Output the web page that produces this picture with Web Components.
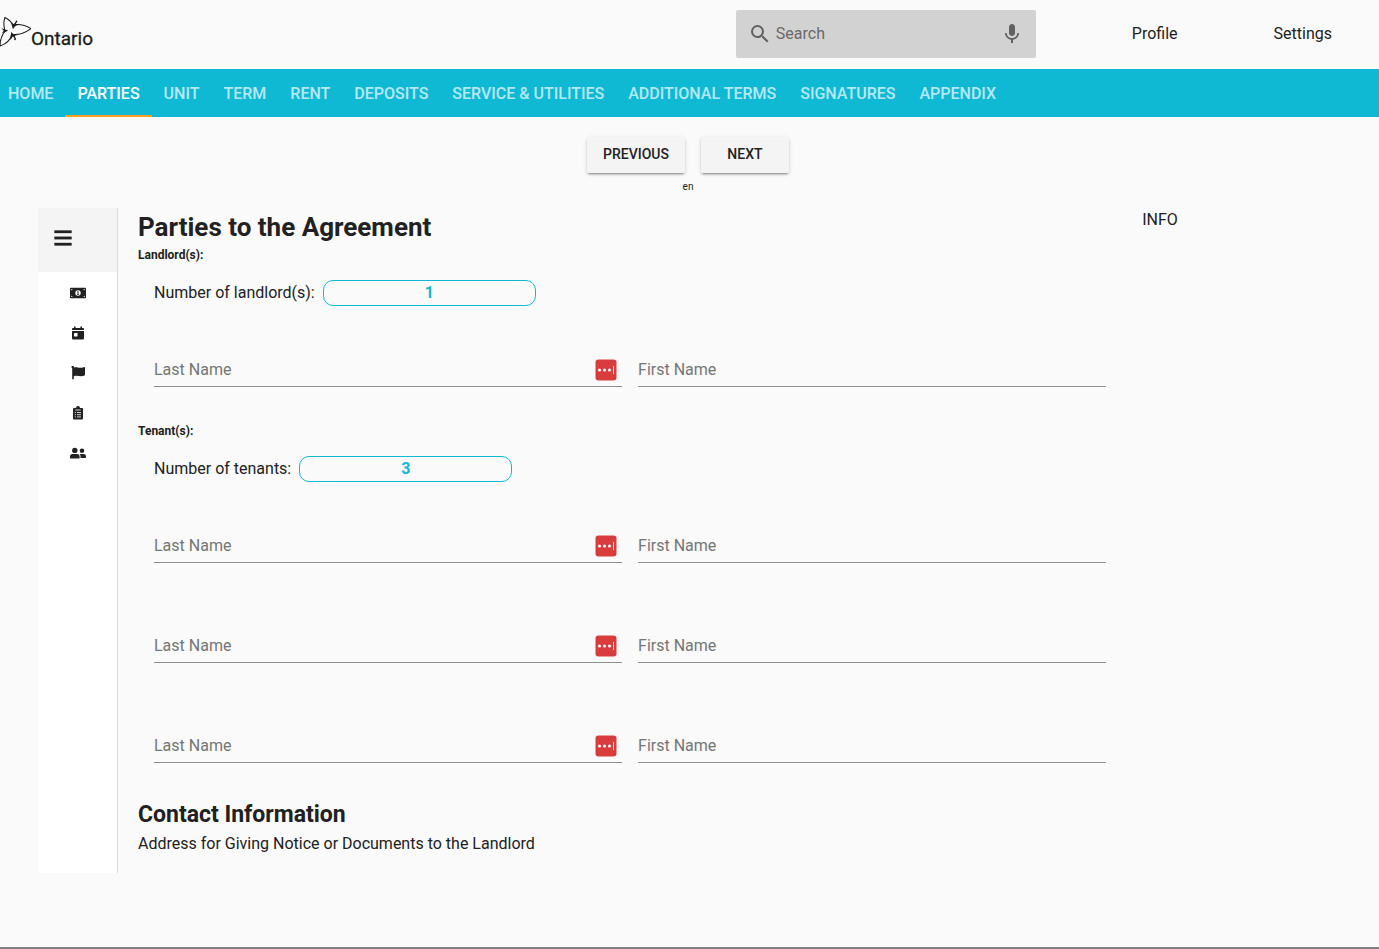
<!DOCTYPE html>
<html lang="en">
<head>
<meta charset="utf-8">
<meta name="viewport" content="width=device-width, initial-scale=1">
<title>Ontario Lease Agreement</title>
<style>
body { margin: 0; background: #fafafa; color: #212121; font: 16px/20px Roboto, sans-serif; }
</style>
</head>
<body>
<lease-app></lease-app>
<script>
function define(name, html, setup) {
  const tpl = document.createElement('template');
  tpl.innerHTML = html;
  customElements.define(name, class extends HTMLElement {
    constructor() {
      super();
      this.attachShadow({ mode: 'open' }).append(tpl.content.cloneNode(true));
    }
    connectedCallback() { if (setup) setup(this, this.shadowRoot); }
  });
}

define('ontario-logo', `
<style>
:host { display: block; }
a { display: flex; align-items: flex-end; color: #1a1a1a; text-decoration: none; }
svg { display: block; width: 31px; height: 34px; }
span { font: 19px/20px Roboto, sans-serif; -webkit-text-stroke: 0.3px #1a1a1a; }
</style>
<a href="#home">
  <svg viewBox="0 0 32 34" aria-hidden="true" fill="none" stroke="#1a1a1a" stroke-linejoin="round">
    <path stroke-width="1.100" d="M5 15.500Q3 8 5 2Q10 4 14 10.500M14.500 9.500Q24 8.500 32 13.500Q24 19.500 13 20.500M12 20Q10 28 0 31.500Q0 22 5.500 15.500"/>
    <path fill="#1a1a1a" stroke="none" d="M11.500 7.500L14 9l2.800-3.200.8.700-1.600 2.800 5-.6-5.500 2.300-2.200 3.200zM1.500 13.200l3.500 1.300L8.500 15.500 5.500 17 2 18.300l1.800-2.500zM11.500 17l2.500 2.300 6-.8-5 2.300 1.500 3.200-.8.600-2.400-3.200-2.600 4.200z"/>
    <circle cx="17" cy="6" r=".9" fill="#1a1a1a" stroke="none"/><circle cx="15.500" cy="24.500" r=".9" fill="#1a1a1a" stroke="none"/>
  </svg>
  <span>Ontario</span>
</a>`);

define('search-box', `
<style>
:host { display: block; width: 300px; }
form { display: flex; align-items: center; height: 48px; padding: 0 12px; box-sizing: border-box; background: #d2d2d2; border-radius: 2px; }
svg { display: block; width: 24px; height: 24px; fill: #616161; flex: none; }
input { flex: 1; min-width: 0; border: 0; padding: 0 4px; background: none; outline: none; font: inherit; color: #212121; }
input::placeholder { color: #696969; opacity: 1; }
button { border: 0; padding: 0; background: none; }
</style>
<form role="search">
  <svg viewBox="0 0 24 24" aria-hidden="true"><path d="M15.5 14h-.79l-.28-.27A6.47 6.47 0 0 0 16 9.500 6.500 6.500 0 1 0 9.500 16c1.610 0 3.090-.59 4.230-1.570l.27.28v.79l5 4.990L20.490 19l-4.990-5zm-6 0C7.010 14 5 11.990 5 9.500S7.010 5 9.500 5 14 7.010 14 9.500 11.990 14 9.500 14z"/></svg>
  <input type="text" placeholder="Search" aria-label="Search">
  <button type="button" aria-label="Search by voice"><svg viewBox="0 0 24 24"><path d="M12 14c1.660 0 2.990-1.340 2.990-3L15 5c0-1.660-1.340-3-3-3S9 3.340 9 5v6c0 1.660 1.340 3 3 3zm5.300-3c0 3-2.540 5.100-5.300 5.100S6.700 14 6.700 11H5c0 3.410 2.720 6.230 6 6.720V21h2v-3.280c3.280-.48 6-3.300 6-6.720h-1.700z"/></svg></button>
</form>`);

define('site-header', `
<style>
:host { display: block; }
header { display: flex; align-items: center; height: 69px; padding-right: 47px; box-sizing: border-box; }
ontario-logo { margin: 0 auto 6px 0; }
nav { display: flex; gap: 96px; padding-left: 96px; }
search-box, nav { margin-bottom: 1px; }
a { color: inherit; text-decoration: none; }
</style>
<header>
  <ontario-logo></ontario-logo>
  <search-box></search-box>
  <nav aria-label="Account"><a href="#profile">Profile</a><a href="#settings">Settings</a></nav>
</header>`);

define('nav-tab', `
<style>
:host { display: block; }
a { display: block; height: 48px; box-sizing: border-box; padding: 0 12px; border-bottom: 2px solid transparent; font-weight: 500; line-height: 50px; text-decoration: none; white-space: nowrap; color: rgba(255,255,255,.7); }
:host([active]) a { color: #fff; border-color: #ff9f1c; }
:host(:first-child) a { padding-left: 8px; }
</style>
<a><slot></slot></a>`, (host, root) => {
  root.querySelector('a').href = '#' + host.textContent.toLowerCase().replace(/[^a-z]+/g, '-');
});

define('tab-bar', `
<style>
:host { display: block; background: #0fb9d4; }
nav { display: flex; }
</style>
<nav aria-label="Lease sections"><slot></slot></nav>`);

define('raised-button', `
<style>
:host { display: block; }
button { display: block; min-width: 88px; height: 36px; padding: 0 16px 2px; border: 0; border-radius: 2px; background: #f4f4f4; color: #212121; font: 500 14px/34px Roboto, sans-serif; box-shadow: 0 3px 1px -2px rgba(0,0,0,.2), 0 2px 2px rgba(0,0,0,.14), 0 1px 5px rgba(0,0,0,.12); }
</style>
<button type="button"><slot></slot></button>`);

define('step-controls', `
<style>
:host { display: block; padding: 20px 3px 15px 0; text-align: center; }
div { display: flex; justify-content: center; gap: 16px; }
p { margin: 7px 0 0; font-size: 10px; line-height: 13px; }
</style>
<div><raised-button>PREVIOUS</raised-button><raised-button>NEXT</raised-button></div>
<p>en</p>`);

define('side-menu', `
<style>
:host { display: block; background: #fff; border-right: 1px solid #dcdcdc; }
.head { display: flex; align-items: center; height: 64px; padding: 0 15px 4px; box-sizing: border-box; background: #f4f4f4; }
button { border: 0; padding: 0; background: none; }
ul { list-style: none; margin: 0; padding: 0; }
a { display: flex; align-items: center; justify-content: center; height: 40px; padding-top: 1px; box-sizing: border-box; }
svg { display: block; fill: #212121; }
</style>
<div class="head"><button type="button" aria-label="Toggle menu"><svg width="20" height="20" viewBox="0 0 20 20"><path d="M1.500 2.500h17v2.500h-17zM1.500 8.700h17v2.500h-17zM1.500 14.900h17v2.500h-17z" stroke="#212121" stroke-width=".3"/></svg></button></div>
<ul>
  <li><a href="#rent" aria-label="Rent"><svg width="16" height="12" viewBox="0 0 16 12"><path fill-rule="evenodd" d="M.8.800h14.400q.8 0 .8.800v8.800q0 .8-.8.800H.8q-.8 0-.8-.8V1.600Q0 .8.800.8z"/><g fill="#fff"><circle cx="8" cy="6" r="2.700"/><path d="M1.300 2h1.500L1.300 3.500zM14.700 2h-1.500l1.500 1.500zM1.300 10h1.500L1.300 8.500zM14.700 10h-1.500l1.500-1.500z"/></g><path d="M7.200 4.200h1.300v2.800h.6v.8H7v-.8h.5V5H7z"/></svg></a></li>
  <li><a href="#term" aria-label="Term"><svg width="14" height="14" viewBox="0 0 14 14"><path d="M1 4V3q0-1 1-1h1V.5h1.600V2h4.800V.5H11V2h1q1 0 1 1v1zM1 5h12v7.500q0 1-1 1H2q-1 0-1-1z"/><rect x="3" y="7" width="3.500" height="3.500" rx=".4" fill="#fff"/></svg></a></li>
  <li><a href="#additional-terms" aria-label="Additional terms"><svg width="14" height="14" viewBox="0 0 14 14"><path d="M.5 1.300a1.200 1.200 0 1 1 2.300.3C6 .4 8 3 12.500 1.200Q14 .6 14 2v6.600q0 .6-.5.900C9.500 11.500 7 8.700 2.800 10.300v3H1.200V2.300Q.5 2 .5 1.300z"/></svg></a></li>
  <li><a href="#appendix" aria-label="Appendix"><svg width="12" height="14" viewBox="0 0 12 14"><path d="M2 2h2a2 2 0 0 1 4 0h2q1 0 1 1v9.500q0 1-1 1H2q-1 0-1-1V3q0-1 1-1z"/><path d="M3.300 4h5.400M2.800 6.500H4M5 6.500h4M2.800 8.700H4M5 8.700h4M2.800 10.900H4M5 10.900h4" stroke="#fff" stroke-width=".8"/></svg></a></li>
  <li><a href="#parties" aria-label="Parties"><svg width="16" height="12" viewBox="0 0 16 12"><circle cx="4.800" cy="3.400" r="2.700"/><circle cx="12" cy="3.700" r="2.300"/><path d="M0 11V9.500Q0 7 2.500 7h4.600Q9.600 7 9.600 9.500V11q0 .5-.5.500H.5Q0 11.500 0 11zM10.500 11V9.300Q10.500 8 9.700 7.100 10 7 10.700 7H13.500Q16 7 16 9.200v1q0 .7-.7.700z"/></svg></a></li>
</ul>`);

define('count-field', `
<style>
:host { display: block; padding: 16px 16px 0; }
label { display: flex; align-items: center; gap: 8px; }
input { width: 213px; height: 26px; box-sizing: border-box; border: 1px solid #0fb9d4; border-radius: 10px; padding: 0 0 2px; background: none; color: #0fb9d4; font: 700 16px/22px Roboto, sans-serif; text-align: center; outline: none; }
</style>
<label><span><slot></slot></span><input type="text" inputmode="numeric"></label>`, (host, root) => {
  root.querySelector('input').value = host.getAttribute('value');
});

define('text-field', `
<style>
:host { display: flex; align-items: center; height: 36px; box-sizing: border-box; border-bottom: 1px solid #8e8e8e; }
input { flex: 1; min-width: 0; border: 0; padding: 2px 0 0; background: none; outline: none; font: inherit; line-height: 20px; color: #212121; }
input::placeholder { color: #757575; opacity: 1; }
button { display: none; border: 0; padding: 0; margin: 3px 5px 0; background: none; }
:host([autofill]) button { display: block; }
svg { display: block; }
</style>
<input type="text">
<button type="button" aria-label="Fill from password manager"><svg width="22" height="22" viewBox="0 0 22 22"><rect x=".5" y=".5" width="21" height="21" rx="3" fill="#d93c3c"/><g fill="#fff"><circle cx="4.500" cy="11" r="1.500"/><circle cx="9.500" cy="11" r="1.500"/><circle cx="14.500" cy="11" r="1.500"/><rect x="18" y="7" width="1" height="8"/></g></svg></button>`, (host, root) => {
  const input = root.querySelector('input');
  input.placeholder = host.getAttribute('label');
  input.setAttribute('aria-label', host.getAttribute('label'));
});

define('name-row', `
<style>
:host { display: grid; grid-template-columns: 1fr 1fr; gap: 16px; padding: 45px 16px 19px; }
</style>
<text-field label="Last Name" autofill></text-field>
<text-field label="First Name"></text-field>`);

define('party-group', `
<style>
:host { display: block; }
:host(:not(:first-of-type)) { margin-top: 16px; }
h2 { margin: 0; font-size: 12px; line-height: 18px; }
</style>
<h2></h2>
<slot></slot>`, (host, root) => {
  root.querySelector('h2').textContent = host.getAttribute('heading');
});

define('parties-form', `
<style>
:host { display: block; padding-bottom: 19px; }
h1 { margin: 0; font-size: 26px; line-height: 38px; }
.contact { margin: 18px 0 4px; font-size: 23px; line-height: 30px; }
p { margin: 0; }
</style>
<h1>Parties to the Agreement</h1>
<party-group heading="Landlord(s):">
  <count-field value="1">Number of landlord(s):</count-field>
  <name-row></name-row>
</party-group>
<party-group heading="Tenant(s):">
  <count-field value="3">Number of tenants:</count-field>
  <name-row></name-row>
  <name-row></name-row>
  <name-row></name-row>
</party-group>
<h2 class="contact">Contact Information</h2>
<p>Address for Giving Notice or Documents to the Landlord</p>`);

define('lease-app', `
<style>
:host { display: block; }
main { display: grid; grid-template-columns: 80px minmax(0, 5fr) minmax(0, 1fr); gap: 20px; padding: 0 40px 74px 38px; }
side-menu { box-sizing: border-box; }
aside { line-height: 23px; }
footer { border-top: 2px solid #808080; }
</style>
<site-header></site-header>
<tab-bar>
  <nav-tab>HOME</nav-tab><nav-tab active>PARTIES</nav-tab><nav-tab>UNIT</nav-tab><nav-tab>TERM</nav-tab><nav-tab>RENT</nav-tab><nav-tab>DEPOSITS</nav-tab><nav-tab>SERVICE &amp; UTILITIES</nav-tab><nav-tab>ADDITIONAL TERMS</nav-tab><nav-tab>SIGNATURES</nav-tab><nav-tab>APPENDIX</nav-tab>
</tab-bar>
<step-controls></step-controls>
<main>
  <side-menu></side-menu>
  <parties-form></parties-form>
  <aside>INFO</aside>
</main>
<footer></footer>`);
</script>
</body>
</html>
